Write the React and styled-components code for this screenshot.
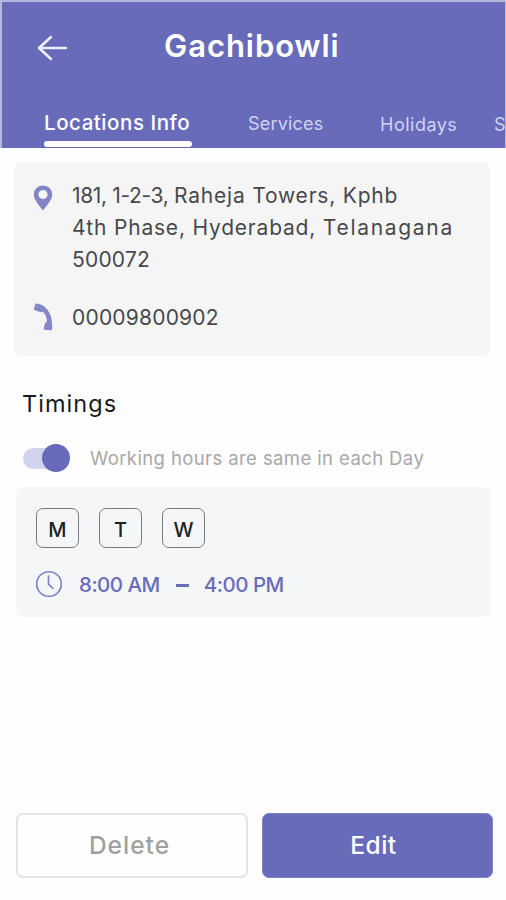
import styled, { createGlobalStyle } from "styled-components"

const GlobalStyle = createGlobalStyle`
    * {
        box-sizing: border-box;
    }

    body {
        margin: 0;
        background-color: #fefefe;
        font-family: Inter, "Open Sans", sans-serif;
        overflow: hidden;
    }

    h1, h2, p {
        margin: 0;
        font-weight: 400;
    }

    button {
        font-family: inherit;
        padding: 0;
    }

    svg {
        display: block;
        flex-shrink: 0;
    }
`;

const PageSty = styled.div`
    width: 506px;
    height: 900px;
    overflow: hidden;
    display: flex;
    flex-direction: column;
`;

const HeaderSty = styled.header`
    height: 148px;
    background-color: #676bba;
    border: solid #b5b7dd;
    border-width: 2px 1px 0 2px;
    display: flex;
    flex-direction: column;
    justify-content: space-between;
    overflow: hidden;
`;

const TitleBar = styled.div`
    height: 90px;
    display: grid;
    grid-template-columns: 127px auto;
    align-items: center;
    padding-left: 35px;
`;

const BackButton = styled.button`
    width: 32px;
    border: none;
    background-color: transparent;
    color: #eef0ff;
    padding-top: 1px;
`;

const Title = styled.h1`
    font-size: 31px;
    font-weight: 600;
    line-height: 40px;
    letter-spacing: 0.95px;
    color: #fff;
    padding-bottom: 3px;
`;

const Tabs = styled.nav`
    display: flex;
    height: 44px;
    padding-left: 42px;
    white-space: nowrap;
`;

const Tab = styled.div`
    width: ${({ $width }) => $width}px;
    margin-right: ${({ $gap }) => $gap}px;
    flex-shrink: 0;
    padding-top: ${({ $top }) => $top}px;
    font-size: ${({ $active }) => ($active ? "20.5px" : "18px")};
    font-weight: ${({ $active }) => ($active ? 500 : 400)};
    letter-spacing: ${({ $spacing }) => $spacing}px;
    line-height: 28px;
    color: ${({ $active }) => ($active ? "#fff" : "#cfd2f3")};
`;

const ActiveTab = styled(Tab)`
    display: flex;
    flex-direction: column;
    justify-content: space-between;
    padding-bottom: 1px;

    &::after {
        content: "";
        height: 6px;
        border-radius: 3px;
        background-color: #fff;
    }
`;

const ContactCard = styled.section`
    width: 476px;
    height: 194px;
    margin: 14px 0 0 14px;
    padding: 17px 19px;
    border-radius: 7px;
    background-color: #f5f5f6;
    display: flex;
    flex-direction: column;
    gap: 26px;
`;

const ContactRow = styled.div`
    display: grid;
    grid-template-columns: 39px auto;
    align-items: start;

    svg {
        margin-top: ${({ $iconTop }) => $iconTop}px;
    }
`;

const ContactText = styled.p`
    padding-top: 1px;
    margin-bottom: -1px;
    font-size: 21px;
    line-height: 32px;
    letter-spacing: 0.2px;
    white-space: nowrap;
    color: #48494b;
`;

const Line = styled.span`
    display: block;
`;

const Spaced = styled.span`
    letter-spacing: ${({ $spacing }) => $spacing}px;
`;

const SectionTitle = styled.h2`
    margin: 32px 0 0 22px;
    font-size: 23.5px;
    line-height: 32px;
    letter-spacing: 1.05px;
    color: #191a1c;
`;

const ToggleRow = styled.div`
    height: 28px;
    margin: 24px 0 0 23px;
    display: flex;
    align-items: center;
    gap: 20px;
`;

const Toggle = styled.div`
    width: 47px;
    height: 28px;
    display: flex;
    align-items: center;

    &::before {
        content: "";
        width: 36px;
        height: 21px;
        border-radius: 11px;
        background-color: #d2d4ed;
    }

    &::after {
        content: "";
        width: 28px;
        height: 28px;
        margin-left: -17px;
        border-radius: 50%;
        background-color: #676bba;
    }
`;

const ToggleLabel = styled.p`
    font-size: 18.5px;
    line-height: 28px;
    letter-spacing: 0.4px;
    white-space: nowrap;
    color: #a7a7a8;
`;

const TimingCard = styled.section`
    width: 475px;
    height: 130px;
    margin: 15px 0 0 16px;
    padding: 21px 19px 0;
    border-radius: 7px;
    background-color: #f5f6f8;
`;

const Days = styled.div`
    display: flex;
    gap: 20px;
    padding-left: 1px;
`;

const Day = styled.div`
    width: 43px;
    height: 40px;
    border: 1.5px solid #7b7c7f;
    border-radius: 7px;
    display: flex;
    align-items: center;
    justify-content: center;
    padding-top: 3px;
    font-size: 20px;
    font-weight: 500;
    color: #202124;
`;

const Hours = styled.div`
    height: 28px;
    margin-top: 22px;
    display: flex;
    align-items: center;
    font-size: 20.5px;
    font-weight: 500;
    line-height: 28px;
    white-space: nowrap;
    color: #696db9;
`;

const Time = styled.span`
    letter-spacing: -0.5px;
    padding-top: 2px;

    svg + & {
        margin-left: 16px;
    }
`;

const Dash = styled.span`
    width: 13px;
    height: 3px;
    margin: 2px 15px 0 16px;
    background-color: #696db9;
`;

const Actions = styled.footer`
    margin: auto 13px 22px 16px;
    display: grid;
    grid-template-columns: 232px 231px;
    gap: 14px;
`;

const ActionButton = styled.button`
    height: 65px;
    border-radius: 7px;
    border: ${({ $filled }) => ($filled ? "1px solid #7c80c4" : "2px solid #e4e4e5")};
    background-color: ${({ $filled }) => ($filled ? "#676bba" : "#fefefe")};
    color: ${({ $filled }) => ($filled ? "#fff" : "#a0a0a1")};
    font-size: 24.5px;
    font-weight: 500;
    letter-spacing: ${({ $filled }) => ($filled ? 0.5 : 1)}px;
    padding: ${({ $filled }) => ($filled ? "0 8px 1px 0" : "0 5px 1px 0")};
`;

const BackIcon = () => (
    <svg width="32" height="26" viewBox="0 0 32 26" fill="none" stroke="currentColor" strokeWidth="2.5" strokeLinecap="round" strokeLinejoin="round">
        <path d="M29 13H2M14 2L2 13l12 11" />
    </svg>
)

const PinIcon = () => (
    <svg width="20" height="27" viewBox="0 0 20 27">
        <path
            d="M10 .5C4.700.5.8 4.500.8 9.500c0 5.500 5.200 10.600 9.200 16 4-5.400 9.200-10.500 9.200-16C19.200 4.500 15.300.5 10 .5zM10 4.900a4.600 4.600 0 1 1 0 9.200 4.600 4.600 0 0 1 0-9.200z"
            fill="#8184c7"
            fillRule="evenodd"
        />
    </svg>
)

const PhoneIcon = () => (
    <svg width="20" height="28" viewBox="0 0 20 28">
        <path
            d="M3.500.6C12 1.500 20.500 9.500 19 26.400c-.1.700-.5 1-1.100.9l-6.300-.5c-.8-.1-1.100-.6-.9-1.300l1.300-5.300c.2-.6.6-.9 1.200-1l.7-.2C13.800 14.500 12.500 11 9.500 8.600l-1 .5c-.4.3-.9.3-1.500 0L1.500 7.100C.9 6.800.6 6.400.8 5.700L2.300 1.300C2.500.7 2.900.5 3.500.6z"
            fill="#8487ca"
        />
    </svg>
)

const ClockIcon = () => (
    <svg width="28" height="28" viewBox="0 0 28 28" fill="none" stroke="#7b7fc3" strokeWidth="1.6" strokeLinecap="round" strokeLinejoin="round">
        <circle cx="14" cy="14" r="12.300" />
        <path d="M13.500 6v8.200l4.500 4.300" />
    </svg>
)

export default function App() {
    return (
        <>
            <GlobalStyle />
            <PageSty>
                <HeaderSty>
                    <TitleBar>
                        <BackButton aria-label="Back"><BackIcon /></BackButton>
                        <Title>Gachibowli</Title>
                    </TitleBar>
                    <Tabs>
                        <ActiveTab $active $width={148} $gap={56} $top={5} $spacing={0.55}>Locations Info</ActiveTab>
                        <Tab $width={76} $gap={56} $top={6} $spacing={0.2}>Services</Tab>
                        <Tab $width={78} $gap={36} $top={7} $spacing={0.5}>Holidays</Tab>
                        <Tab $width={50} $gap={0} $top={7} $spacing={0}>S</Tab>
                    </Tabs>
                </HeaderSty>

                <ContactCard>
                    <ContactRow $iconTop={6}>
                        <PinIcon />
                        <ContactText>
                            <Line>
                                <Spaced $spacing={-0.35}>181, 1-2-3, </Spaced>
                                <Spaced $spacing={0.8}>Raheja Towers, Kphb</Spaced>
                            </Line>
                            <Line>
                                <Spaced $spacing={0.8}>4th Phase, Hyderabad, </Spaced>
                                <Spaced $spacing={1.7}>Telanagana</Spaced>
                            </Line>
                            <Line>500072</Line>
                        </ContactText>
                    </ContactRow>
                    <ContactRow $iconTop={2}>
                        <PhoneIcon />
                        <ContactText>00009800902</ContactText>
                    </ContactRow>
                </ContactCard>

                <SectionTitle>Timings</SectionTitle>
                <ToggleRow>
                    <Toggle role="switch" aria-checked="true" />
                    <ToggleLabel>Working hours are same in each Day</ToggleLabel>
                </ToggleRow>

                <TimingCard>
                    <Days>
                        {["M", "T", "W"].map((day) => <Day key={day}>{day}</Day>)}
                    </Days>
                    <Hours>
                        <ClockIcon />
                        <Time>8:00 AM</Time>
                        <Dash />
                        <Time>4:00 PM</Time>
                    </Hours>
                </TimingCard>

                <Actions>
                    <ActionButton>Delete</ActionButton>
                    <ActionButton $filled>Edit</ActionButton>
                </Actions>
            </PageSty>
        </>
    )
}
